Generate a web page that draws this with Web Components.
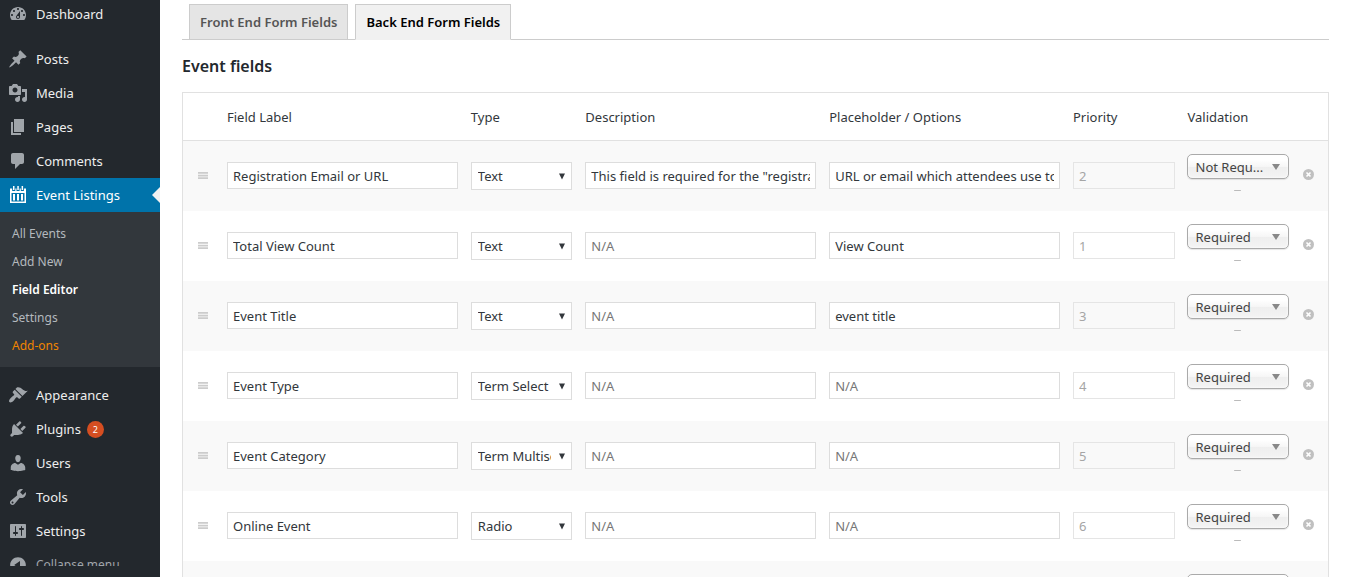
<!DOCTYPE html>
<html lang="en">
<head>
<meta charset="utf-8">
<meta name="viewport" content="width=device-width, initial-scale=1">
<title>Field Editor</title>
<style>
  body {
    margin: 0;
    height: 100vh;
    overflow: hidden;
    background: #fff;
    color: #32373c;
    font: 13px/20px "Noto Sans", "Open Sans", sans-serif;
  }
</style>
</head>
<body>
<admin-shell>
  <admin-menu slot="menu">
    <menu-item icon="dashboard" label="Dashboard"></menu-item>
    <menu-gap></menu-gap>
    <menu-item icon="post" label="Posts"></menu-item>
    <menu-item icon="media" label="Media"></menu-item>
    <menu-item icon="page" label="Pages"></menu-item>
    <menu-item icon="comments" label="Comments"></menu-item>
    <menu-item icon="calendar" label="Event Listings" current></menu-item>
    <sub-menu>
      <a href="#all">All Events</a>
      <a href="#new">Add New</a>
      <a href="#fields" class="current">Field Editor</a>
      <a href="#settings">Settings</a>
      <a href="#addons" class="promo">Add-ons</a>
    </sub-menu>
    <menu-gap></menu-gap>
    <menu-item icon="appearance" label="Appearance"></menu-item>
    <menu-item icon="plugins" label="Plugins" count="2"></menu-item>
    <menu-item icon="users" label="Users"></menu-item>
    <menu-item icon="tools" label="Tools"></menu-item>
    <menu-item icon="settings" label="Settings"></menu-item>
    <menu-item icon="collapse" label="Collapse menu" muted></menu-item>
  </admin-menu>
  <nav-tabs>
    <a href="#front">Front End Form Fields</a>
    <a href="#back" class="active">Back End Form Fields</a>
  </nav-tabs>
  <section-title>Event fields</section-title>
  <fields-table></fields-table>
</admin-shell>

<script>
const define = (name, html, setup) => {
  const template = document.createElement('template');
  template.innerHTML = html;
  customElements.define(name, class extends HTMLElement {
    connectedCallback() {
      if (this.shadowRoot) return;
      const root = this.attachShadow({ mode: 'open' });
      root.append(template.content.cloneNode(true));
      if (setup) setup(this, root);
    }
  });
};

const ICONS = {
  dashboard: 'M3.76 16h12.48c1.1-1.37 1.76-3.11 1.76-5 0-4.42-3.58-8-8-8s-8 3.58-8 8c0 1.89.66 3.63 1.76 5zM10 4c.55 0 1 .45 1 1s-.45 1-1 1-1-.45-1-1 .45-1 1-1zM6 6c.55 0 1 .45 1 1s-.45 1-1 1-1-.45-1-1 .45-1 1-1zm8 0c.55 0 1 .45 1 1s-.45 1-1 1-1-.45-1-1 .45-1 1-1zm-5.37 5.55L12 7v6c0 1.1-.9 2-2 2s-2-.9-2-2c0-.57.24-1.08.63-1.45zM4 10c.55 0 1 .45 1 1s-.45 1-1 1-1-.45-1-1 .45-1 1-1zm12 0c.55 0 1 .45 1 1s-.45 1-1 1-1-.45-1-1 .45-1 1-1zm-5 3c0-.55-.45-1-1-1s-1 .45-1 1 .45 1 1 1 1-.45 1-1z',
  post: 'M10.44 3.02l1.82-1.82 6.36 6.35-1.83 1.82c-1.05-.68-2.48-.57-3.41.36l-.75.75c-.92.93-1.04 2.35-.35 3.41l-1.83 1.82-2.41-2.41-2.8 2.79c-.42.42-3.38 2.71-3.8 2.29s1.86-3.39 2.28-3.81l2.79-2.79L4.1 9.36l1.83-1.82c1.05.69 2.48.57 3.4-.36l.75-.75c.93-.92 1.05-2.35.36-3.41z',
  media: 'M13 11V4c0-.55-.45-1-1-1h-1.67L9 1H5L3.67 3H2c-.55 0-1 .45-1 1v7c0 .55.45 1 1 1h10c.55 0 1-.45 1-1zM7 4.5c1.38 0 2.5 1.12 2.5 2.5S8.38 9.5 7 9.5 4.5 8.38 4.5 7 5.62 4.5 7 4.5zM14 6h5v10.5c0 1.38-1.12 2.5-2.5 2.5S14 17.88 14 16.5s1.12-2.5 2.5-2.5c.17 0 .34.02.5.05V9h-3V6zm-4 8.05V13h2v3.5c0 1.38-1.12 2.5-2.5 2.5S7 17.88 7 16.5 8.12 14 9.5 14c.17 0 .34.02.5.05z',
  page: 'M6 15V2h10v13H6zm-1 1h8v2H3V5h2v11z',
  comments: 'M5 2h9c1.1 0 2 .9 2 2v7c0 1.1-.9 2-2 2h-2l-5 5v-5H5c-1.1 0-2-.9-2-2V4c0-1.1.9-2 2-2z',
  calendar: 'M5 1h1.5v4H5zM9.3 1h1.5v4H9.3zM13.6 1h1.5v4h-1.5zM2 3.500h2.200V6h3.100V3.500h1.200V6h3.100V3.500h1.200V6h3.100V3.500H18V18H2zM3.500 8v8.500h13V8zM5 9h2v6.500H5zM9 9h2v6.500H9zM13 9h2v6.500h-2z',
  appearance: 'M14.48 11.06L7.41 3.99l1.5-1.5c.5-.56 2.3-.47 3.51.32 1.21.8 1.43 1.28 2.91 2.1 1.18.64 2.45 1.26 4.45.85zm-.71.71L6.7 4.7 4.93 6.47c-.39.39-.39 1.02 0 1.41l1.06 1.06c.39.39.39 1.03 0 1.42-.6.6-1.43 1.11-2.21 1.69-.35.26-.7.53-1.01.84C1.43 14.23.4 16.08 1.4 17.07c.99 1 2.84-.03 4.18-1.36.31-.31.58-.66.85-1.02.57-.78 1.08-1.61 1.69-2.21.39-.39 1.02-.39 1.41 0l1.06 1.06c.39.39 1.02.39 1.41 0z',
  plugins: 'M13.11 4.36L9.87 7.6 8 5.73l3.24-3.24c.35-.34 1.05-.2 1.56.32.52.51.66 1.21.31 1.55zm-8 1.77l.91-1.12 9.01 9.01-1.19.84c-.71.71-2.63 1.16-3.82 1.16H6.14L4.9 17.26c-.59.59-1.54.59-2.12 0-.59-.58-.59-1.53 0-2.12l1.24-1.24v-3.88c0-1.13.4-3.19 1.09-3.89zm7.26 3.97l3.24-3.24c.34-.35 1.04-.21 1.55.31.52.51.66 1.21.31 1.55l-3.24 3.25z',
  users: 'M10 9.25c-2.27 0-2.73-3.44-2.73-3.44C7 4.02 7.82 2 9.97 2c2.16 0 2.98 2.02 2.71 3.81 0 0-.41 3.44-2.68 3.44zm0 2.57L12.72 10c2.39 0 4.52 2.33 4.52 4.53v2.49s-3.65 1.13-7.24 1.13c-3.65 0-7.24-1.13-7.24-1.13v-2.49c0-2.25 1.94-4.48 4.47-4.48z',
  tools: 'M16.68 9.77c-1.34 1.34-3.3 1.67-4.95.99l-5.41 6.52c-.99.99-2.59.99-3.58 0s-.99-2.59 0-3.57l6.52-5.42c-.68-1.65-.35-3.61.99-4.95 1.28-1.28 3.12-1.62 4.72-1.06l-2.89 2.89 2.82 2.82 2.86-2.87c.53 1.58.18 3.39-1.08 4.65zM3.81 16.21c.4.39 1.04.39 1.43 0 .4-.4.4-1.04 0-1.43-.39-.4-1.03-.4-1.43 0-.39.39-.39 1.03 0 1.43z',
  settings: 'M18 16V4c0-.55-.45-1-1-1H3c-.55 0-1 .45-1 1v12c0 .55.45 1 1 1h14c.55 0 1-.45 1-1zM8 11h1c.55 0 1 .45 1 1s-.45 1-1 1H8v1.5c0 .28-.22.5-.5.5s-.5-.22-.5-.5V13H6c-.55 0-1-.45-1-1s.45-1 1-1h1V5.500c0-.28.22-.5.5-.5s.5.22.5.5V11zm5-2h-1c-.55 0-1-.45-1-1s.45-1 1-1h1V5.500c0-.28.22-.5.5-.5s.5.22.5.5V7h1c.55 0 1 .45 1 1s-.45 1-1 1h-1v5.500c0 .28-.22.5-.5.5s-.5-.22-.5-.5V9z',
  collapse: 'M10 2.160c4.330 0 7.840 3.510 7.840 7.840s-3.510 7.840-7.840 7.840S2.160 14.330 2.160 10 5.670 2.160 10 2.160zm2 11.720V6.120L6.180 9.970z'
};

define('admin-shell', `
  <style>
    :host { display: flex; height: 100vh; overflow: hidden; }
    aside { flex: 0 0 160px; }
    main { flex: 1; min-width: 0; padding: 4px 20px 0 22px; overflow: hidden; }
  </style>
  <aside><slot name="menu"></slot></aside>
  <main><slot></slot></main>`);

define('admin-menu', `
  <style>
    :host { display: block; height: 100%; box-sizing: border-box; padding-bottom: 11px; background: #23282d; }
    .clip { height: 100%; overflow: hidden; }
    nav { margin-top: -3px; }
  </style>
  <div class="clip"><nav aria-label="Main menu"><slot></slot></nav></div>`);

define('menu-gap', `<style>:host { display: block; height: 11px; }</style>`);

define('menu-item', `
  <style>
    :host { display: block; }
    a { display: flex; align-items: center; height: 34px; color: #eee; text-decoration: none; }
    svg { width: 20px; height: 20px; margin: 0 8px; flex: none; fill: #a0a5aa; }
    .count { margin-left: 6px; width: 17px; height: 17px; border-radius: 9px; background: #d54e21; color: #fff; font-size: 9px; line-height: 17px; text-align: center; }
    .notch { margin-left: auto; border: 8px solid transparent; border-right-color: #f1f1f1; border-left: 0; }
    :host([current]) a { background: #0073aa; color: #fff; }
    :host([current]) svg { fill: #fff; }
    :host([muted]) a { color: #a0a5aa; font-size: 12px; }
  </style>
  <a href="#"><svg viewBox="0 0 20 20" aria-hidden="true"><path fill-rule="evenodd"/></svg><span class="label"></span></a>`,
  (el, root) => {
    root.querySelector('path').setAttribute('d', ICONS[el.getAttribute('icon')]);
    root.querySelector('.label').textContent = el.getAttribute('label');
    const add = (cls, text) => {
      const span = document.createElement('span');
      span.className = cls;
      span.textContent = text;
      root.querySelector('a').append(span);
    };
    if (el.hasAttribute('count')) add('count', el.getAttribute('count'));
    if (el.hasAttribute('current')) add('notch', '');
  });

define('sub-menu', `
  <style>
    :host { display: flex; flex-direction: column; padding: 8px 12px 7px; background: #32373c; font-size: 12px; }
    ::slotted(a) { line-height: 28px; color: #b4b9be; text-decoration: none; }
    ::slotted(a.current) { color: #fff; font-weight: 600; }
    ::slotted(a.promo) { color: #f18500; }
  </style>
  <slot></slot>`);

define('nav-tabs', `
  <style>
    :host { display: flex; gap: 7px; padding-left: 7px; border-bottom: 1px solid #ccc; font-size: 13px; font-weight: 600; }
    ::slotted(a) { padding: 5px 10px; margin-bottom: -1px; border: 1px solid #ccc; background: #e5e5e5; color: #555; line-height: 24px; text-decoration: none; }
    ::slotted(a.active) { background: #f1f1f1; border-bottom-color: #f1f1f1; color: #000; }
  </style>
  <slot></slot>`);

define('section-title', `
  <style>
    :host { display: block; }
    h3 { margin: 14px 0; font-size: 16px; line-height: 24px; font-weight: 600; color: #23282d; }
  </style>
  <h3><slot></slot></h3>`);

define('text-field', `
  <style>
    :host { display: block; }
    input { display: block; box-sizing: border-box; width: 100%; height: 27px; margin: 0; padding: 0 5px; border: 1px solid #ddd; border-radius: 0; background: #fff; color: #32373c; font: inherit; outline: 0; }
    input::placeholder { color: #777; opacity: 1; }
    input:disabled { background: transparent; border-color: #e5e5e5; color: #a5a5a5; }
  </style>
  <input type="text">`,
  (el, root) => {
    const input = root.querySelector('input');
    input.value = el.getAttribute('value') || '';
    input.placeholder = el.getAttribute('placeholder') || '';
    input.disabled = el.hasAttribute('disabled');
    input.setAttribute('aria-label', el.getAttribute('label'));
  });

define('type-select', `
  <style>
    :host { display: grid; }
    select, svg { grid-area: 1 / 1; }
    select { appearance: none; box-sizing: border-box; width: 100%; height: 28px; margin: 0; padding: 0 20px 0 6px; border: 1px solid #ddd; border-radius: 0; background: #fff; color: #32373c; font: inherit; }
    svg { place-self: center end; width: 6px; height: 7px; margin-right: 7px; fill: #32373c; pointer-events: none; }
  </style>
  <select aria-label="Type"><option></option></select>
  <svg viewBox="0 0 6 7" aria-hidden="true"><path d="M0 .5h6L3 6.500z"/></svg>`,
  (el, root) => { root.querySelector('option').textContent = el.getAttribute('value'); });

define('validation-select', `
  <style>
    :host { display: grid; grid-template-rows: 25px 1px; row-gap: 11px; }
    select, svg { grid-area: 1 / 1; }
    select { appearance: none; box-sizing: border-box; width: 100%; height: 25px; margin: 0; padding: 0 20px 0 8px; border: 1px solid #aaa; border-radius: 5px; background: linear-gradient(#fff 20%, #f6f6f6 50%, #eee 52%, #f4f4f4); box-shadow: 0 0 3px #fff inset, 0 1px 1px rgba(0,0,0,.1); color: #444; font: inherit; }
    svg { place-self: center end; width: 8px; height: 6px; margin-right: 9px; fill: #888; pointer-events: none; }
    i { grid-row: 2; justify-self: center; width: 7px; background: #bbb; border-radius: 1px; }
  </style>
  <select aria-label="Validation"><option></option></select>
  <svg viewBox="0 0 8 6" aria-hidden="true"><path d="M0 0h8L4 6z"/></svg>
  <i></i>`,
  (el, root) => { root.querySelector('option').textContent = el.getAttribute('value'); });

const ROWS = [
  ['Registration Email or URL', 'Text', 'This field is required for the "registration" area', 'URL or email which attendees use to register', '2', 'Not Requ...'],
  ['Total View Count', 'Text', '', 'View Count', '1', 'Required'],
  ['Event Title', 'Text', '', 'event title', '3', 'Required'],
  ['Event Type', 'Term Select', '', '', '4', 'Required'],
  ['Event Category', 'Term Multiselect', '', '', '5', 'Required'],
  ['Online Event', 'Radio', '', '', '6', 'Required'],
  ['', 'Text', '', '', '7', 'Required']
];

define('fields-table', `
  <style>
    :host { display: block; }
    table { width: 100%; table-layout: fixed; border: 1px solid #e1e1e1; border-spacing: 0; background: #fff; }
    .sort { width: 37px; }
    .short { width: 10%; }
    .remove { width: 33px; }
    th { height: 47px; padding: 0 7px; border-bottom: 1px solid #e1e1e1; text-align: left; font-weight: 400; }
    td { height: 49px; padding: 21px 6px 0 7px; vertical-align: top; }
    td:nth-child(7) { height: 57px; padding-top: 13px; padding-left: 6px; }
    tbody tr:nth-child(odd) { background: #f9f9f9; }
    td:first-child { padding: 31px 0 0 15px; height: 39px; }
    td:last-child { padding: 28px 0 0 8px; height: 42px; }
    svg { display: block; }
    button { display: block; padding: 0; border: 0; background: none; cursor: pointer; }
  </style>
  <table>
    <colgroup><col class="sort"><col><col class="short"><col><col><col class="short"><col class="short"><col class="remove"></colgroup>
    <thead><tr><th></th><th>Field Label</th><th>Type</th><th>Description</th><th>Placeholder / Options</th><th>Priority</th><th>Validation</th><th></th></tr></thead>
    <tbody></tbody>
  </table>`,
  (el, root) => {
    const esc = s => s.replace(/"/g, '&quot;');
    root.querySelector('tbody').innerHTML = ROWS.map(([label, type, desc, hint, order, rule]) => `
      <tr>
        <td><svg width="10" height="7" fill="#ccc" aria-hidden="true"><path d="M0 0h10v1.700H0zM0 2.700h10v1.700H0zM0 5.300h10V7H0z"/></svg></td>
        <td><text-field label="Field label" value="${esc(label)}"></text-field></td>
        <td><type-select value="${type}"></type-select></td>
        <td><text-field label="Description" placeholder="N/A" value="${esc(desc)}"></text-field></td>
        <td><text-field label="Placeholder or options" placeholder="N/A" value="${esc(hint)}"></text-field></td>
        <td><text-field label="Priority" value="${order}" disabled></text-field></td>
        <td><validation-select value="${rule}"></validation-select></td>
        <td><button type="button" aria-label="Remove field"><svg width="11" height="11" viewBox="0 0 11 11"><circle cx="5.500" cy="5.500" r="5.500" fill="#c0c0c0"/><path d="M3.500 3.500l4 4m0-4l-4 4" stroke="#fff" stroke-width="1.600"/></svg></button></td>
      </tr>`).join('');
  });
</script>
</body>
</html>
